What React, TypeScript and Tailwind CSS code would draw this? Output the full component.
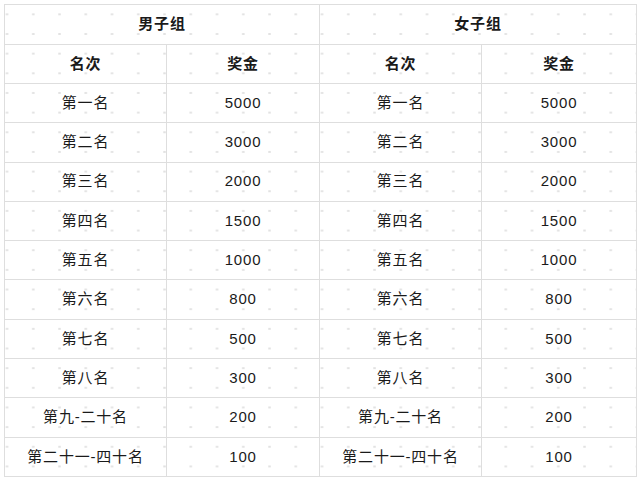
const PRIZES: Array<{ rank: string; amount: number }> = [
  { rank: "第一名", amount: 5000 },
  { rank: "第二名", amount: 3000 },
  { rank: "第三名", amount: 2000 },
  { rank: "第四名", amount: 1500 },
  { rank: "第五名", amount: 1000 },
  { rank: "第六名", amount: 800 },
  { rank: "第七名", amount: 500 },
  { rank: "第八名", amount: 300 },
  { rank: "第九-二十名", amount: 200 },
  { rank: "第二十一-四十名", amount: 100 },
]

const cell = "border border-[#dedede] text-center align-middle p-0"

export default function App() {
  return (
    <div className="p-[4px] bg-white font-['Liberation_Sans','Noto_Sans_CJK_SC',sans-serif] text-[15px] tracking-[0.8px] text-[#1a1a1a]">
      <table className="w-[632px] table-fixed border-collapse bg-[radial-gradient(circle,#e2e2e2_1px,transparent_1.4px)] bg-[size:26.25px_19.67px] bg-[position:-10.6px_0px]">
        <colgroup>
          <col className="w-[162px]" />
          <col className="w-[153px]" />
          <col className="w-[162px]" />
          <col className="w-[155px]" />
        </colgroup>
        <thead>
          <tr className="h-[39.5px] font-bold">
            <th colSpan={2} className={cell}>男子组</th>
            <th colSpan={2} className={cell}>女子组</th>
          </tr>
          <tr className="h-[39.5px] font-bold">
            <th className={cell}>名次</th>
            <th className={cell}>奖金</th>
            <th className={cell}>名次</th>
            <th className={cell}>奖金</th>
          </tr>
        </thead>
        <tbody>
          {PRIZES.map((p) => (
            <tr key={p.rank} className="h-[39.3px]">
              <td className={cell}>{p.rank}</td>
              <td className={cell}>{p.amount}</td>
              <td className={cell}>{p.rank}</td>
              <td className={cell}>{p.amount}</td>
            </tr>
          ))}
        </tbody>
      </table>
    </div>
  )
}
